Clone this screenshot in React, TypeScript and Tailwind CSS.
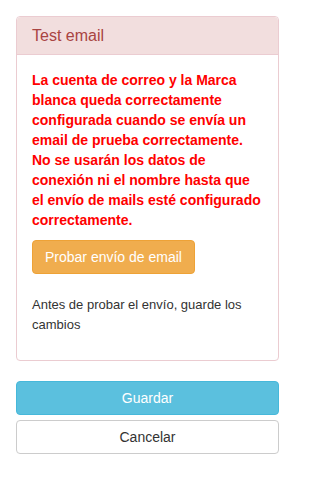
export default function App() {
  return (
    <div className="min-h-screen w-[295px] bg-white p-4 font-['Liberation_Sans',Arial,sans-serif] text-[14px] leading-[20px] text-[#333]">
      <div className="mb-5 rounded border border-[#ebccd1] bg-white">
        <div className="rounded-t border-b border-[#ebccd1] bg-[#f2dede] px-[15px] py-[9px] text-[16px] leading-[19px] text-[#a94442]">
          Test email
        </div>
        <div className="p-[15px]">
          <p className="mb-[10px] font-bold text-[#ff0000]">
            La cuenta de correo y la Marca blanca queda correctamente configurada cuando se envía un email de prueba correctamente. No se usarán los datos de conexión ni el nombre hasta que el envío de mails esté configurado correctamente.
          </p>
          <button className="rounded border border-[#eea236] bg-[#f0ad4e] px-3 py-[6px] text-[14px] leading-[20px] text-white">
            Probar envío de email
          </button>
          <p className="mt-[21px] mb-[10px] text-[13px] leading-[20px]">
            Antes de probar el envío, guarde los cambios
          </p>
        </div>
      </div>
      <div className="flex flex-col gap-[5px]">
        <button className="w-full rounded border border-[#46b8da] bg-[#5bc0de] px-3 py-[6px] text-[14px] leading-[20px] text-white">
          Guardar
        </button>
        <button className="w-full rounded border border-[#ccc] bg-white px-3 py-[6px] text-[14px] leading-[20px] text-[#333]">
          Cancelar
        </button>
      </div>
    </div>
  );
}
